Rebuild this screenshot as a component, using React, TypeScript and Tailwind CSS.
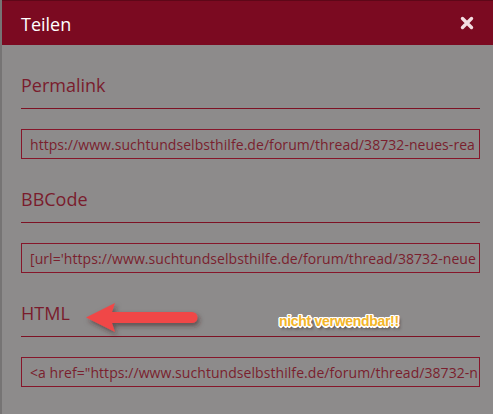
import React from 'react';

// Eingabefelder zeigen nur den sichtbaren Teil der Links
const sections = [
  { title: 'Permalink', value: 'https://www.suchtundselbsthilfe.de/forum/thread/38732-neues-rea' },
  { title: 'BBCode', value: "[url='https://www.suchtundselbsthilfe.de/forum/thread/38732-neue" },
  { title: 'HTML', value: '<a href="https://www.suchtundselbsthilfe.de/forum/thread/38732-n' },
];

function CloseIcon() {
  return (
    <svg width="14" height="14" viewBox="0 0 14 14">
      <path d="M2.5 2.5 L11.5 11.5 M11.5 2.5 L2.5 11.5" stroke="#f3dde1" strokeWidth="3.4" strokeLinecap="round" />
    </svg>
  );
}

function Arrow() {
  return (
    <svg width="124" height="40" viewBox="0 0 124 40" className="overflow-visible">
      <defs>
        <filter id="sh" x="-20%" y="-40%" width="140%" height="200%">
          <feDropShadow dx="2" dy="3" stdDeviation="2.5" floodColor="#3a1a1a" floodOpacity="0.55" />
        </filter>
      </defs>
      <g filter="url(#sh)">
        <path d="M2 18.5 L31 4 L28 13 L108 13 A5.5 5.5 0 0 1 108 24 L28 24 L31 33 Z" fill="#f04747" />
      </g>
    </svg>
  );
}

export default function App() {
  return (
    <div className="w-[493px] h-[414px] overflow-hidden bg-[#8d8b8b] border-l-2 border-[#767474] relative" style={{ fontFamily: '"Open Sans", sans-serif' }}>
      <div className="h-[45px] -ml-[2px] bg-[#7b0a21] border-t border-[#5e0718] flex items-center justify-between pl-[21px] pr-[19px]">
        <span className="text-white text-[18px] leading-none pt-[1px]">Teilen</span>
        <CloseIcon />
      </div>

      <div className="pl-[19px] pr-[13px] pt-[27px]">
        {sections.map((s) => (
          <div key={s.title} className="mb-[27px]">
            <div className="text-[#7a1c2d] text-[18px] leading-[27px] pb-[9px] border-b border-[#7d1224]">{s.title}</div>
            <div className="mt-[20px] h-[30px] border border-[#86162a] pl-[8px] flex items-center overflow-hidden whitespace-nowrap text-[14px] tracking-[0.06px] text-[#7a1f2e]">
              {s.value}
            </div>
          </div>
        ))}
      </div>

      <div className="absolute left-[82px] top-[299px]">
        <Arrow />
      </div>

      <div
        className="absolute left-[277px] top-[311px] text-[14px] font-bold tracking-[-0.3px] text-[#f3b428] whitespace-nowrap"
        style={{
          fontFamily: '"Liberation Sans", sans-serif',
          textShadow: '-1px -1px 0 #fff, 1px -1px 0 #fff, -1px 1px 0 #fff, 1px 1px 0 #fff, 0 -1.5px 0 #fff, 0 1.5px 0 #fff, -1.5px 0 0 #fff, 1.5px 0 0 #fff, 2px 3px 3px rgba(40,20,20,0.65)',
        }}
      >
        nicht verwendbar!!
      </div>
    </div>
  );
}
